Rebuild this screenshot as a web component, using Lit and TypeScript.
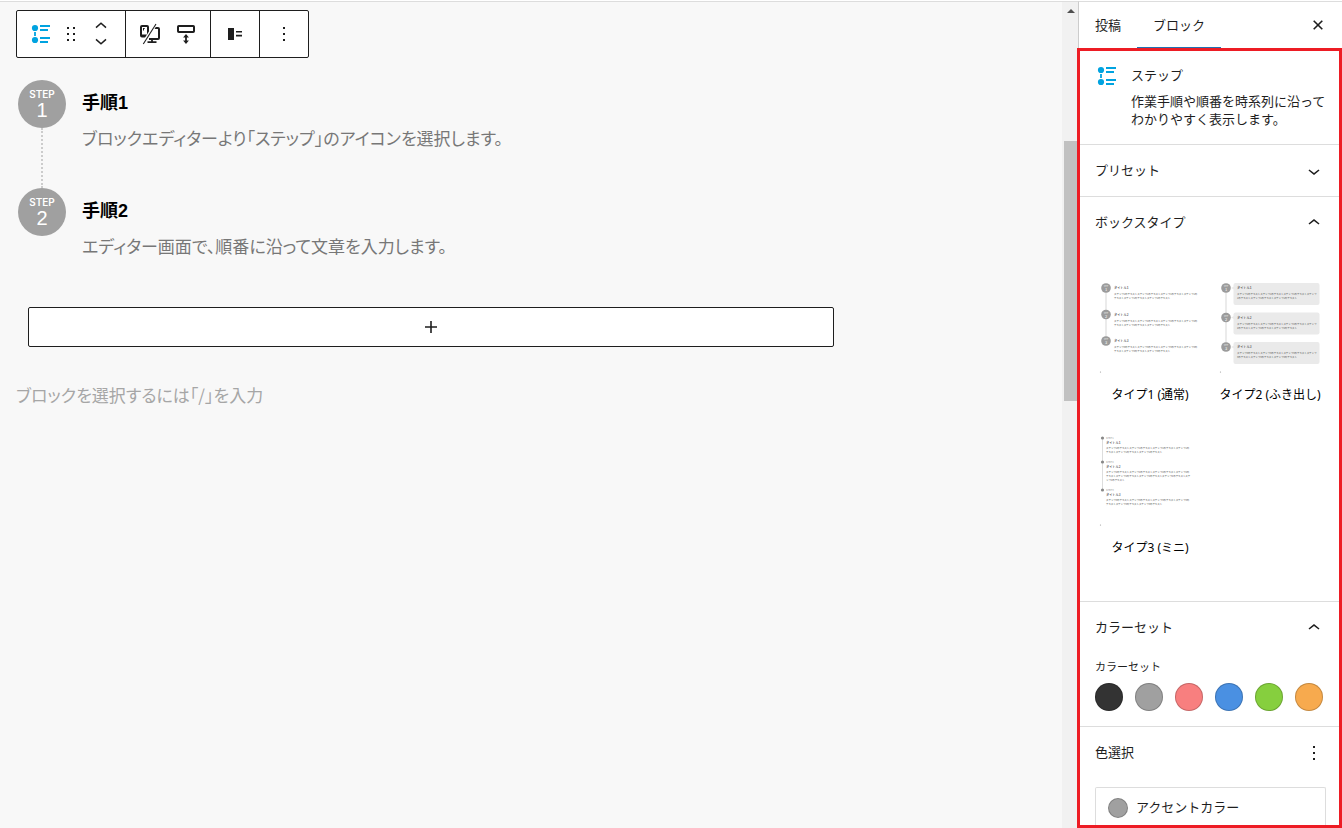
import { LitElement, html, css, svg } from "lit";
import { customElement, property, state } from "lit/decorators.js";
import { classMap } from "lit/directives/class-map.js";
import { styleMap } from "lit/directives/style-map.js";

const stepIcon = html`<svg class="icon" width="20" height="20" viewBox="0 0 20 20" aria-hidden="true" fill="#00a3e0">
  <circle cx="4" cy="4" r="3.1" /><circle cx="4" cy="16" r="3.1" />
  <path d="M3.1 8h1.8v4H3.1zM9 1h10v2H9zM9 5h8v2H9zM9 13h10v2H9zM9 17h8v2H9z" />
</svg>`;

const chevron = (up: boolean) => html`<svg width="24" height="24" viewBox="0 0 24 24" aria-hidden="true" fill="#1e1e1e">
  <path d=${up
    ? "M6.5 12.4 12 8l5.5 4.4-.9 1.2L12 10l-4.5 3.6z"
    : "M17.5 11.6 12 16l-5.5-4.4.9-1.2L12 14l4.5-3.6z"} />
</svg>`;

const moreIcon = html`<svg width="24" height="24" viewBox="0 0 24 24" aria-hidden="true" fill="#1e1e1e">
  <path d="M11 5h2v2h-2zM11 11h2v2h-2zM11 17h2v2h-2z" />
</svg>`;

const sample = (n: number, count: number) => `ステップ${n}のテキスト`.repeat(count);

/** Thumbnail of one of the three step layouts. */
function thumbnail(type: number) {
  if (type === 3) {
    const rows = [
      { n: 1, y: 13, lines: 2 },
      { n: 2, y: 37, lines: 3 },
      { n: 3, y: 65, lines: 2 },
    ];
    return html`<svg class="thumb" viewBox="0 0 110 102" aria-hidden="true">
      <path d="M7.5 13v52" stroke="#ddd" stroke-width="1" />
      ${rows.map(({ n, y, lines }) => {
        const text = sample(n, lines === 3 ? 8 : 6);
        return svg`
          <circle cx="7.5" cy=${y} r="1.6" fill="#888" />
          <text class="faint" x="11" y=${y + 1}>STEP${n}</text>
          <text class="title" x="11" y=${y + 6}>タイトル${n}</text>
          <text class="body" x="11" y=${y + 11}>${text.slice(0, 36)}</text>
          <text class="body" x="11" y=${y + 15}>${lines === 3 ? text.slice(36, 72) : text.slice(36)}</text>
          ${lines === 3 ? svg`<text class="body" x="11" y=${y + 19}>${text.slice(72)}</text>` : ""}`;
      })}
      <circle cx="5.5" cy="100" r=".6" fill="#999" />
    </svg>`;
  }
  const boxed = type === 2;
  const gap = boxed ? 29.5 : 26.5;
  return html`<svg class="thumb" viewBox="0 0 110 102" aria-hidden="true">
    <path d="M11 16v${gap * 2}" stroke="#e4e4e4" stroke-width="1.5" />
    ${[0, 1, 2].map((i) => {
      const y = 16 + i * gap;
      const x = boxed ? 22 : 19;
      const text = sample(i + 1, 6);
      const split = boxed ? 34 : 36;
      return svg`
        ${boxed ? svg`<path d="M16 ${y}l3 -1.5v3z" fill="#eaeaea" /><rect x="18.5" y=${y - 5} width="86" height="22" rx="2" fill="#eaeaea" />` : ""}
        <circle cx="11" cy=${y} r="4.8" fill="#9b9b9b" />
        <text class="num" x="11" y=${y - 1} font-size="1.6">STEP</text>
        <text class="num" x="11" y=${y + 3} font-size="4">${i + 1}</text>
        <text class="title" x=${x} y=${y + 1}>タイトル${i + 1}</text>
        <text class="body" x=${x} y=${y + 7}>${text.slice(0, split)}</text>
        <text class="body" x=${x} y=${y + 11}>${text.slice(split)}</text>`;
    })}
    <circle cx="5.5" cy="100" r=".6" fill="#999" />
  </svg>`;
}

const base = css`
  * { box-sizing: border-box; }
  button {
    font: inherit;
    color: inherit;
    background: none;
    border: 0;
    padding: 0;
    margin: 0;
    display: inline-flex;
    align-items: center;
    justify-content: center;
    cursor: pointer;
  }
  svg { display: block; flex: none; }
  h2, h3, p, ol { margin: 0; padding: 0; font-weight: 400; font-size: inherit; }
`;

@customElement("block-toolbar")
class BlockToolbar extends LitElement {
  static styles = [base, css`
    :host { display: block; }
    .bar {
      display: inline-flex;
      height: 48px;
      vertical-align: top;
      background: #fff;
      border: 1px solid #1e1e1e;
      border-radius: 2px;
    }
    .group { display: flex; align-items: center; justify-content: center; }
    .group + .group { border-left: 1px solid #1e1e1e; }
    .first { padding: 0 14px; gap: 8px; }
    .pair { padding: 0 12px; gap: 12px; }
    .single { width: 49px; }
    .movers { display: flex; flex-direction: column; }
    .movers button { height: 16px; }
  `];

  render() {
    return html`<div class="bar" role="toolbar" aria-label="ブロックツール">
      <div class="group first">
        <button aria-label="ステップ">${stepIcon}</button>
        <button aria-label="ドラッグ"><svg width="24" height="24" viewBox="0 0 24 24" fill="#1e1e1e" aria-hidden="true">
          <path d="M8 5h2v2H8zM8 11h2v2H8zM8 17h2v2H8zM14 5h2v2h-2zM14 11h2v2h-2zM14 17h2v2h-2z" />
        </svg></button>
        <div class="movers">
          <button aria-label="上に移動"><svg width="20" height="16" viewBox="0 0 20 16" fill="none" stroke="#1e1e1e" stroke-width="1.5" aria-hidden="true"><path d="m5 9.6 5-4.3 5 4.3" /></svg></button>
          <button aria-label="下に移動"><svg width="20" height="16" viewBox="0 0 20 16" fill="none" stroke="#1e1e1e" stroke-width="1.5" aria-hidden="true"><path d="m5 5.4 5 4.3 5-4.3" /></svg></button>
        </div>
      </div>
      <div class="group pair">
        <button aria-label="表示設定"><svg width="24" height="24" viewBox="0 0 24 24" fill="none" stroke="#1e1e1e" stroke-width="2" aria-hidden="true">
          <rect x="3" y="4" width="7" height="10.5" rx="1" />
          <path d="M3 13.5h7M15 6h5a1 1 0 0 1 1 1v9a1 1 0 0 1-1 1h-9" />
          <path d="M14 17v3M9.5 20.2h9" stroke-width="1.8" />
          <path d="M5.3 6.5h1.4M5.5 6v2.5" stroke-width="1" />
          <path d="M18.2 1.2 4.8 22.4" stroke="#fff" stroke-width="3.4" />
          <path d="M18 2 5.3 22" stroke-width="1.1" />
        </svg></button>
        <button aria-label="余白"><svg width="24" height="24" viewBox="0 0 24 24" fill="none" stroke="#1e1e1e" aria-hidden="true">
          <rect x="4" y="4" width="16" height="6" rx=".8" stroke-width="2" />
          <path d="M12 14v6" stroke-width="1.8" /><path d="m12 12 2.9 3.4H9.1zM12 22l2.9-3.4H9.1z" fill="#1e1e1e" stroke="none" />
        </svg></button>
      </div>
      <div class="group single">
        <button aria-label="配置"><svg width="24" height="24" viewBox="0 0 24 24" fill="#1e1e1e" aria-hidden="true">
          <path d="M5 6h6v12H5zM13 9h6v1.6h-6zM13 12.8h6v1.6h-6z" />
        </svg></button>
      </div>
      <div class="group single"><button aria-label="オプション">${moreIcon}</button></div>
    </div>`;
  }
}

@customElement("step-editor")
class StepEditor extends LitElement {
  static styles = [base, css`
    :host {
      display: block;
      padding: 8px 16px;
      color: #777;
      font: 16px/24px "Liberation Sans", "Noto Sans CJK JP", sans-serif;
    }
    .steps { list-style: none; max-width: 830px; padding: 22px 2px 0; }
    .step { display: grid; grid-template-columns: 48px 1fr; column-gap: 16px; }
    .rail { display: flex; flex-direction: column; align-items: center; }
    .badge {
      width: 48px;
      height: 48px;
      flex: none;
      padding-top: 8px;
      border-radius: 50%;
      background: #a0a0a0;
      color: #fff;
      text-align: center;
    }
    .word { display: block; font: 600 10px/12px Inter, sans-serif; }
    .number { display: block; font-size: 20px; line-height: 20px; }
    .line { flex: 1; border-left: 2px dotted #ccc; }
    .content { padding: 11px 0 38px; }
    .step:last-child .content { padding-bottom: 0; }
    .heading { color: #000; font-size: 18px; font-weight: 700; }
    .text {
      margin-top: 11px;
      font-family: "Noto Sans CJK JP", sans-serif;
      font-size: 17px;
      font-feature-settings: "palt";
    }
    .add {
      display: flex;
      width: calc(100% - 24px);
      max-width: 806px;
      height: 40px;
      margin: 49px 12px 0;
      background: #fff;
      border: 1px solid #1e1e1e;
      border-radius: 2px;
    }
    .prompt {
      display: block;
      width: 100%;
      max-width: 830px;
      margin-top: 36px;
      padding: 0;
      border: 0;
      background: none;
      font: 17px/24px "Noto Sans CJK JP", sans-serif;
      font-feature-settings: "palt";
    }
    .prompt::placeholder { color: #a6a6a6; opacity: 1; }
  `];

  private steps = [
    { title: "手順1", text: "ブロックエディターより「ステップ」のアイコンを選択します。" },
    { title: "手順2", text: "エディター画面で、順番に沿って文章を入力します。" },
  ];

  render() {
    return html`
      <block-toolbar></block-toolbar>
      <ol class="steps">
        ${this.steps.map((s, i) => html`<li class="step">
          <div class="rail">
            <div class="badge"><span class="word">STEP</span><span class="number">${i + 1}</span></div>
            ${i < this.steps.length - 1 ? html`<div class="line"></div>` : ""}
          </div>
          <div class="content">
            <h3 class="heading">${s.title}</h3>
            <p class="text">${s.text}</p>
          </div>
        </li>`)}
      </ol>
      <button class="add" aria-label="ステップを追加"><svg width="24" height="24" viewBox="0 0 24 24" fill="none" stroke="#1e1e1e" stroke-width="1.6" aria-hidden="true"><path d="M12 6v12M6 12h12" /></svg></button>
      <input class="prompt" aria-label="ブロックを追加" placeholder="ブロックを選択するには「/」を入力" />
    `;
  }
}

@customElement("settings-section")
class SettingsSection extends LitElement {
  @property() heading = "";
  @property({ type: Boolean }) open = false;

  static styles = [base, css`
    :host { display: block; flex: none; border-top: 1px solid #ddd; }
    .toggle {
      display: flex;
      justify-content: space-between;
      width: 100%;
      height: 51px;
      padding: 0 16px;
    }
    .label { padding-bottom: 2px; }
    .body { padding: 0 16px; }
  `];

  render() {
    return html`
      <h2><button class="toggle" aria-expanded=${this.open} @click=${() => (this.open = !this.open)}>
        <span class="label">${this.heading}</span>${chevron(this.open)}
      </button></h2>
      ${this.open ? html`<div class="body"><slot></slot></div>` : ""}
    `;
  }
}

@customElement("settings-sidebar")
class SettingsSidebar extends LitElement {
  @state() private tab = "ブロック";

  static styles = [base, css`
    :host {
      display: flex;
      flex-direction: column;
      position: relative;
      min-height: 0;
      background: #fff;
      border-left: 1px solid #ccc;
      color: #1e1e1e;
      font: 13px/18px "Noto Sans", "Noto Sans CJK JP", sans-serif;
    }
    .tabs { display: flex; flex: none; height: 48px; }
    .tab { padding: 0 16px; border-bottom: 3px solid transparent; }
    .tab.active { border-bottom-color: #2271b1; }
    .close { width: 48px; margin-left: auto; }
    .frame {
      position: absolute;
      inset: 46px 0 0 -2px;
      border: 3px solid #ed1c24;
      pointer-events: none;
    }
    .card { display: flex; flex: none; gap: 14px; padding: 16px 16px 0; height: 94px; }
    .card .icon { margin-left: 2px; }
    .card h2 { margin-bottom: 8px; }
    .types {
      display: grid;
      grid-template-columns: repeat(2, 110px);
      gap: 20px 10px;
      padding: 24px 0 43px;
    }
    .type {
      flex-direction: column;
      justify-content: flex-start;
      height: 133px;
      gap: 12px;
      font-size: 12px;
      white-space: nowrap;
      color: #000;
    }
    .thumb { width: 110px; height: 102px; }
    .thumb text { font-family: "Noto Sans CJK JP", sans-serif; }
    .title { font-size: 3.2px; font-weight: 500; fill: #444; }
    .body { font-size: 2.45px; fill: #555; }
    .faint { font-size: 2.6px; fill: #999; }
    .num { fill: #fff; text-anchor: middle; }
    .caption { font-size: 11px; line-height: 18px; padding-top: 5px; }
    .swatches { display: flex; gap: 12px; padding: 7px 0 15px; }
    .swatch {
      width: 28px;
      height: 28px;
      flex: none;
      border-radius: 50%;
      border: 1px solid rgba(0, 0, 0, 0.2);
    }
    .colors { flex: none; border-top: 1px solid #ddd; padding: 0 16px; }
    .colors-head { display: flex; align-items: center; justify-content: space-between; height: 51px; }
    .colors-head h2 { padding-bottom: 2px; }
    .accent {
      width: 100%;
      height: 41px;
      margin-top: 9px;
      padding: 0 12px;
      justify-content: flex-start;
      gap: 8px;
      border: 1px solid #ddd;
      border-bottom: 0;
      border-radius: 2px 2px 0 0;
    }
    .accent-label { padding-bottom: 2px; }
    .dot { width: 20px; height: 20px; border-radius: 50%; background: #a0a0a0; border: 1px solid rgba(0, 0, 0, 0.2); }
  `];

  private types = ["タイプ1 (通常)", "タイプ2 (ふき出し)", "タイプ3 (ミニ)"];

  private palette = [
    { name: "ブラック", color: "#333333" },
    { name: "グレー", color: "#a0a0a0" },
    { name: "レッド", color: "#f87f7f" },
    { name: "ブルー", color: "#4a90e2" },
    { name: "グリーン", color: "#86cf3e" },
    { name: "オレンジ", color: "#f7aa4e" },
  ];

  render() {
    return html`
      <div class="tabs">
        ${["投稿", "ブロック"].map((t) => html`<button
          class=${classMap({ tab: true, active: this.tab === t })}
          @click=${() => (this.tab = t)}>${t}</button>`)}
        <button class="close" aria-label="閉じる"><svg width="24" height="24" viewBox="0 0 24 24" fill="none" stroke="#1e1e1e" stroke-width="1.6" aria-hidden="true"><path d="m7.7 6.7 8.6 8.6M16.3 6.7l-8.6 8.6" /></svg></button>
      </div>
      <div class="card">
        ${stepIcon}
        <div>
          <h2>ステップ</h2>
          <p>作業手順や順番を時系列に沿ってわかりやすく表示します。</p>
        </div>
      </div>
      <settings-section heading="プリセット"></settings-section>
      <settings-section heading="ボックスタイプ" open>
        <div class="types">
          ${this.types.map((label, i) => html`<button class="type">${thumbnail(i + 1)}<span>${label}</span></button>`)}
        </div>
      </settings-section>
      <settings-section heading="カラーセット" open>
        <p class="caption">カラーセット</p>
        <div class="swatches">
          ${this.palette.map((p) => html`<button class="swatch" aria-label=${p.name} style=${styleMap({ backgroundColor: p.color })}></button>`)}
        </div>
      </settings-section>
      <div class="colors">
        <div class="colors-head"><h2>色選択</h2><button aria-label="色のオプション">${moreIcon}</button></div>
        <button class="accent"><span class="dot"></span><span class="accent-label">アクセントカラー</span></button>
      </div>
      <div class="frame"></div>
    `;
  }
}

@customElement("app-root")
class AppRoot extends LitElement {
  static styles = [base, css`
    :host {
      box-sizing: border-box;
      display: grid;
      grid-template-columns: minmax(0, 1fr) 16px 264px;
      grid-template-rows: minmax(0, 1fr);
      height: 100vh;
      padding-top: 1px;
      overflow: hidden;
      background: #fff;
    }
    .pane { border-top: 1px solid #ddd; }
    step-editor { background: #f8f8f8; overflow: hidden; }
    .scrollbar {
      display: flex;
      flex-direction: column;
      background: #f1f1f1;
      padding-left: 2px;
    }
    .arrow { height: 17px; display: flex; align-items: center; justify-content: center; }
    .thumb { height: 260px; margin-top: 122px; background: #c1c1c1; }
  `];

  render() {
    return html`
      <step-editor class="pane"></step-editor>
      <div class="scrollbar pane">
        <div class="arrow"><svg width="8" height="4" viewBox="0 0 8 4" fill="#505050" aria-hidden="true"><path d="M4 0l4 4H0z" /></svg></div>
        <div class="thumb"></div>
      </div>
      <settings-sidebar class="pane"></settings-sidebar>
    `;
  }
}
